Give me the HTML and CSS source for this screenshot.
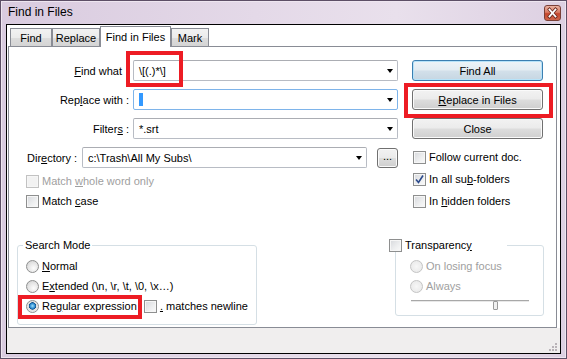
FILE: index.html
```html
<!DOCTYPE html>
<html lang="en">
<head>
  <meta charset="UTF-8" />
  <title>Find in Files</title>
  <link rel="stylesheet" href="styles.css">
</head>
<body>
  <div class="window">
    <div class="titlebar">
      <span class="title">Find in Files</span>
      <div class="close-btn">
        <svg width="15" height="14" viewBox="0 0 15 14">
          <path d="M4.5 3.5 L10.5 10.5 M10.5 3.5 L4.5 10.5" stroke="#6b2a20" stroke-width="3.4" stroke-linecap="square"/>
          <path d="M4.5 3.5 L10.5 10.5 M10.5 3.5 L4.5 10.5" stroke="#ffffff" stroke-width="1.8" stroke-linecap="square"/>
        </svg>
      </div>
    </div>

    <div class="client">
      <div class="tabs">
        <div class="tab tab-find">Find</div>
        <div class="tab tab-replace">Replace</div>
        <div class="tab tab-files active">Find in Files</div>
        <div class="tab tab-mark">Mark</div>
      </div>

      <div class="panel">
        <div class="upper">
          <div class="form-col">
            <div class="field-row">
              <span class="field-label label-find"><u>F</u>ind what</span>
              <div class="combo combo-wide"><span>\[(.)*\]</span><i class="arrow"></i></div>
            </div>
            <div class="field-row">
              <span class="field-label">Rep<u>l</u>ace with :</span>
              <div class="combo combo-wide focused"><span class="caret"></span><i class="arrow"></i></div>
            </div>
            <div class="field-row">
              <span class="field-label">Filter<u>s</u> :</span>
              <div class="combo combo-wide"><span>*.srt</span><i class="arrow"></i></div>
            </div>
            <div class="field-row">
              <span class="dir-label">Dir<u>e</u>ctory :</span>
              <div class="combo combo-dir"><span>c:\Trash\All My Subs\</span><i class="arrow"></i></div>
              <div class="btn btn-browse">...</div>
            </div>
            <div class="check-row left-check disabled"><span class="check"></span><span>Match <u>w</u>hole word only</span></div>
            <div class="check-row left-check"><span class="check"></span><span>Match <u>c</u>ase</span></div>
          </div>

          <div class="action-col">
            <div class="btn btn-default">Find All</div>
            <div class="btn"><span><u>R</u>eplace in Files</span></div>
            <div class="btn">Close</div>
            <div class="check-row right-check"><span class="check"></span><span>Follow current doc.</span></div>
            <div class="check-row right-check">
              <span class="check checked">
                <svg width="9" height="9" viewBox="0 0 9 9"><path d="M1 4.5 L3.5 7.5 L8 0.5" fill="none" stroke="#2c4a8c" stroke-width="1.6"/></svg>
              </span><span>In all su<u>b</u>-folders</span>
            </div>
            <div class="check-row right-check"><span class="check"></span><span>In <u>h</u>idden folders</span></div>
          </div>
        </div>

        <div class="groups">
          <fieldset class="group search-mode">
            <legend>Search Mode</legend>
            <div class="radio-row"><span class="radio"></span><span><u>N</u>ormal</span></div>
            <div class="radio-row"><span class="radio"></span><span>E<u>x</u>tended (\n, \r, \t, \0, \x…)</span></div>
            <div class="radio-row">
              <span class="regex-option"><span class="radio selected"></span><span>Re<u>g</u>ular expression</span></span>
              <span class="check"></span><span><u>.</u> matches newline</span>
            </div>
          </fieldset>

          <fieldset class="group transparency">
            <legend><span class="check"></span><span>Transparenc<u>y</u></span></legend>
            <div class="radio-row disabled"><span class="radio"></span><span>On losing focus</span></div>
            <div class="radio-row disabled"><span class="radio"></span><span>Always</span></div>
            <div class="slider">
              <div class="groove"></div>
              <span class="thumb"></span>
            </div>
          </fieldset>
        </div>
      </div>

      <div class="statusbar">
        <svg class="grip" width="10" height="10" viewBox="0 0 10 10">
          <rect x="7" y="1" width="2" height="2" fill="#b9b3b8"/>
          <rect x="4" y="4" width="2" height="2" fill="#b9b3b8"/>
          <rect x="7" y="4" width="2" height="2" fill="#b9b3b8"/>
          <rect x="1" y="7" width="2" height="2" fill="#b9b3b8"/>
          <rect x="4" y="7" width="2" height="2" fill="#b9b3b8"/>
          <rect x="7" y="7" width="2" height="2" fill="#b9b3b8"/>
        </svg>
      </div>
    </div>

    <!-- red annotation frames drawn over the dialog -->
    <div class="mark mark-find"></div>
    <div class="mark mark-replace"></div>
    <div class="mark mark-regex"></div>
  </div>
</body>
</html>
```

FILE: styles.css
```css
html, body {
  margin: 0;
  padding: 0;
  background: #ffffff;
}

body {
  font-family: "Liberation Sans", Arial, sans-serif;
  font-size: 11px;
  color: #000000;
}

u {
  text-decoration: underline;
  text-underline-offset: 1px;
}

.window {
  position: relative;
  width: 567px;
  height: 359px;
  box-sizing: border-box;
  border: 1px solid #5d4f66;
  box-shadow: inset 0 0 0 1px #eee6f0;
  background: linear-gradient(90deg, #d9cbdf 0%, #e4d9e8 45%, #e9e0ec 70%, #ddd0e2 100%);
  padding: 0 5px 4px 5px;
  display: flex;
  flex-direction: column;
}

/* title bar */

.titlebar {
  height: 23px;
  display: flex;
  align-items: flex-start;
  justify-content: space-between;
  padding-left: 2px;
}

.title {
  font-size: 12px;
  line-height: 23px;
  color: #000000;
}

.close-btn {
  width: 17px;
  height: 16px;
  margin-top: 4px;
  box-sizing: border-box;
  border: 1px solid #7a4038;
  border-radius: 3px;
  background: linear-gradient(180deg, #eab2a2 0%, #d97a62 45%, #c4462c 55%, #d0654a 100%);
  display: flex;
  align-items: center;
  justify-content: center;
}

.close-btn svg {
  display: block;
}

/* client area */

.client {
  flex: 1;
  border: 1px solid #000000;
  background: #ffffff;
  display: flex;
  flex-direction: column;
}

.tabs {
  display: flex;
  align-items: flex-end;
  padding: 1px 0 0 3px;
  margin-bottom: -1px;
  position: relative;
  z-index: 1;
}

.tab {
  height: 19px;
  box-sizing: border-box;
  border: 1px solid #898c95;
  background: linear-gradient(180deg, #f2f2f2 0%, #ebebeb 50%, #dddddd 51%, #d4d4d4 100%);
  display: flex;
  align-items: center;
  justify-content: center;
  white-space: nowrap;
  font-size: 11px;
}

.tab-find { width: 42px; }
.tab-replace { width: 48px; }
.tab-files { width: 71px; }
.tab-mark { width: 38px; }

.tab.active {
  height: 21px;
  border-bottom: none;
  background: #ffffff;
  padding-bottom: 1px;
}

.panel {
  flex: 1;
  margin: 0 3px 0 1px;
  border: 1px solid #898c95;
  background: #ffffff;
}

.statusbar {
  height: 24px;
  background: #f0eeee;
  display: flex;
  justify-content: flex-end;
  align-items: flex-end;
  padding: 0 2px 1px 0;
}

.grip {
  display: block;
}

/* upper part */

.upper {
  display: flex;
  align-items: flex-start;
  padding-top: 13px;
}

.form-col {
  width: 403px;
}

.action-col {
  width: 131px;
}

.field-row {
  display: flex;
  align-items: center;
  height: 21px;
  margin-bottom: 8px;
}

.field-row:nth-child(4) {
  margin-bottom: 3px;
}

.field-label {
  width: 120px;
  text-align: right;
  margin-right: 4px;
  white-space: nowrap;
}

.label-find {
  width: 113px;
  margin-right: 11px;
}

.dir-label {
  width: 55px;
  margin-left: 18px;
  white-space: nowrap;
}

.combo {
  height: 21px;
  box-sizing: border-box;
  border: 1px solid #b8bcc4;
  border-top-color: #abadb3;
  border-radius: 2px;
  background: #ffffff;
  display: flex;
  align-items: center;
  justify-content: space-between;
  padding: 0 4px 0 5px;
  white-space: nowrap;
}

.combo-wide {
  width: 265px;
}

.combo-dir {
  width: 285px;
}

.combo.focused {
  border-color: #7eb4ea;
}

.caret {
  display: block;
  width: 4px;
  height: 13px;
  background: #3399ff;
}

.arrow {
  width: 0;
  height: 0;
  border-top: 4px solid #000000;
  border-left: 3.5px solid transparent;
  border-right: 3.5px solid transparent;
}

/* buttons */

.btn {
  height: 21px;
  box-sizing: border-box;
  border: 1px solid #707070;
  border-radius: 3px;
  background: linear-gradient(180deg, #f2f2f2 0%, #ebebeb 48%, #dddddd 52%, #cfcfcf 100%);
  box-shadow: inset 0 0 0 1px #fafafa;
  display: flex;
  align-items: center;
  justify-content: center;
  margin-bottom: 8px;
  white-space: nowrap;
}

.btn-default {
  border-color: #3c7fb1;
  background: linear-gradient(180deg, #eef4f8 0%, #e3ecf2 48%, #d3e0ea 52%, #c6d6e2 100%);
  box-shadow: inset 0 0 0 1px #b7e3f9;
}

.btn-browse {
  width: 21px;
  height: 20px;
  margin: 0 0 0 10px;
  padding-bottom: 3px;
  box-sizing: border-box;
}

/* check boxes and radios */

.check-row,
.radio-row {
  display: flex;
  align-items: center;
  white-space: nowrap;
}

.left-check {
  height: 20px;
  margin-left: 17px;
}

.action-col .btn:nth-child(3) {
  margin-bottom: 7px;
}

.right-check {
  height: 22px;
  margin-left: 1px;
}

.check {
  width: 13px;
  height: 13px;
  flex: none;
  box-sizing: border-box;
  border: 1px solid #8e8f8f;
  background: linear-gradient(135deg, #d6d8dc 0%, #eeeff0 60%, #fafafa 100%);
  box-shadow: inset 0 0 0 1px #f6f6f6;
  margin-right: 3px;
  display: flex;
  align-items: center;
  justify-content: center;
}

.check svg {
  display: block;
}

.disabled {
  color: #a0a0a0;
}

.disabled .check {
  border-color: #c2c2c2;
  background: #f2f2f2;
}

.radio {
  width: 13px;
  height: 13px;
  flex: none;
  box-sizing: border-box;
  border: 1px solid #8e8f8f;
  border-radius: 50%;
  background: radial-gradient(circle at 60% 65%, #fdfdfd 0%, #e4e4e4 55%, #cbcbcb 100%);
  margin-right: 3px;
}

.radio.selected {
  background: radial-gradient(circle at 50% 45%, #9ee0fb 0%, #2d8bd0 30%, #0d4d86 42%, #e0e0e0 48%, #f4f4f4 100%);
}

.disabled .radio {
  border-color: #c4c4c4;
  background: radial-gradient(circle, #f7f7f7 0%, #e6e6e6 100%);
}

/* group boxes */

.groups {
  display: flex;
  align-items: flex-start;
  margin-top: 27px;
  padding-left: 8px;
}

.group {
  margin: 0;
  min-width: 0;
  box-sizing: border-box;
  border: 1px solid #d5dfe5;
  border-radius: 3px;
  padding: 4px 8px 0 8px;
}

.group legend {
  line-height: 13px;
  padding: 0 2px;
  margin-left: -3px;
  white-space: nowrap;
}

.search-mode {
  width: 240px;
  height: 86px;
}

.search-mode .radio-row {
  height: 20px;
}

.regex-option {
  display: flex;
  align-items: center;
  width: 124px;
}

.transparency {
  width: 149px;
  height: 77px;
  margin-left: 138px;
  padding-left: 14px;
}

.transparency legend {
  display: flex;
  align-items: center;
  width: 119px;
  box-sizing: border-box;
  padding: 0 0 0 1px;
  margin-left: -22px;
}

.transparency .radio-row {
  height: 20px;
}

.slider {
  position: relative;
  width: 118px;
  height: 10px;
  margin-left: 1px;
}

.groove {
  height: 1px;
  margin-top: 4px;
  border-top: 1px solid #a8a8a8;
  background: #e8e8e8;
}

.thumb {
  position: absolute;
  left: 82px;
  top: 1px;
  width: 5px;
  height: 9px;
  box-sizing: border-box;
  border: 1px solid #9a9a9a;
  border-radius: 1px;
  background: #f0f0f0;
}

/* red annotation frames */

.mark {
  position: absolute;
  box-sizing: border-box;
  border: 4px solid #ed1c24;
}

.mark-find {
  left: 125px;
  top: 50px;
  width: 57px;
  height: 36px;
}

.mark-replace {
  left: 403px;
  top: 82px;
  width: 149px;
  height: 35px;
}

.mark-regex {
  left: 17px;
  top: 294px;
  width: 124px;
  height: 24px;
}
```
